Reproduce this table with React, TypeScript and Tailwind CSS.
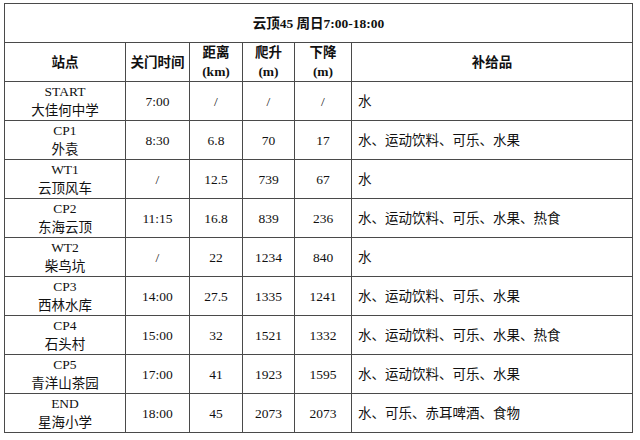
const rows = [
  { code: "START", name: "大佳何中学", time: "7:00", dist: "/", up: "/", down: "/", supply: "水" },
  { code: "CP1", name: "外袁", time: "8:30", dist: "6.8", up: "70", down: "17", supply: "水、运动饮料、可乐、水果" },
  { code: "WT1", name: "云顶风车", time: "/", dist: "12.5", up: "739", down: "67", supply: "水" },
  { code: "CP2", name: "东海云顶", time: "11:15", dist: "16.8", up: "839", down: "236", supply: "水、运动饮料、可乐、水果、热食" },
  { code: "WT2", name: "柴鸟坑", time: "/", dist: "22", up: "1234", down: "840", supply: "水" },
  { code: "CP3", name: "西林水库", time: "14:00", dist: "27.5", up: "1335", down: "1241", supply: "水、运动饮料、可乐、水果" },
  { code: "CP4", name: "石头村", time: "15:00", dist: "32", up: "1521", down: "1332", supply: "水、运动饮料、可乐、水果、热食" },
  { code: "CP5", name: "青洋山茶园", time: "17:00", dist: "41", up: "1923", down: "1595", supply: "水、运动饮料、可乐、水果" },
  { code: "END", name: "星海小学", time: "18:00", dist: "45", up: "2073", down: "2073", supply: "水、可乐、赤耳啤酒、食物" },
];

const cell = "border border-[#4a4a4a] text-center align-middle p-0 leading-[19px]";

export default function App() {
  return (
    <div
      className="w-[640px] h-[440px] bg-white pl-[4px] pt-[3px] text-[13.5px] text-[#111]"
      style={{ fontFamily: '"Liberation Serif", "Noto Sans CJK SC", serif' }}
    >
      <table className="table-fixed border-collapse w-[628px]">
        <colgroup>
          <col className="w-[121px]" />
          <col className="w-[64px]" />
          <col className="w-[53px]" />
          <col className="w-[52px]" />
          <col className="w-[57px]" />
          <col className="w-[281px]" />
        </colgroup>
        <thead>
          <tr className="h-[39px]">
            <th colSpan={6} className={`${cell} font-bold`}>
              云顶45 周日7:00-18:00
            </th>
          </tr>
          <tr className="h-[39px]">
            <th className={`${cell} font-bold`}>站点</th>
            <th className={`${cell} font-bold`}>关门时间</th>
            <th className={`${cell} font-bold`}>
              距离
              <br />
              (km)
            </th>
            <th className={`${cell} font-bold`}>
              爬升
              <br />
              (m)
            </th>
            <th className={`${cell} font-bold`}>
              下降
              <br />
              (m)
            </th>
            <th className={`${cell} font-bold`}>补给品</th>
          </tr>
        </thead>
        <tbody>
          {rows.map((r) => (
            <tr key={r.code} className="h-[39px]">
              <td className={cell}>
                {r.code}
                <br />
                {r.name}
              </td>
              <td className={cell}>{r.time}</td>
              <td className={cell}>{r.dist}</td>
              <td className={cell}>{r.up}</td>
              <td className={cell}>{r.down}</td>
              <td className={`${cell} text-left pl-[6px]`}>{r.supply}</td>
            </tr>
          ))}
        </tbody>
      </table>
    </div>
  );
}
